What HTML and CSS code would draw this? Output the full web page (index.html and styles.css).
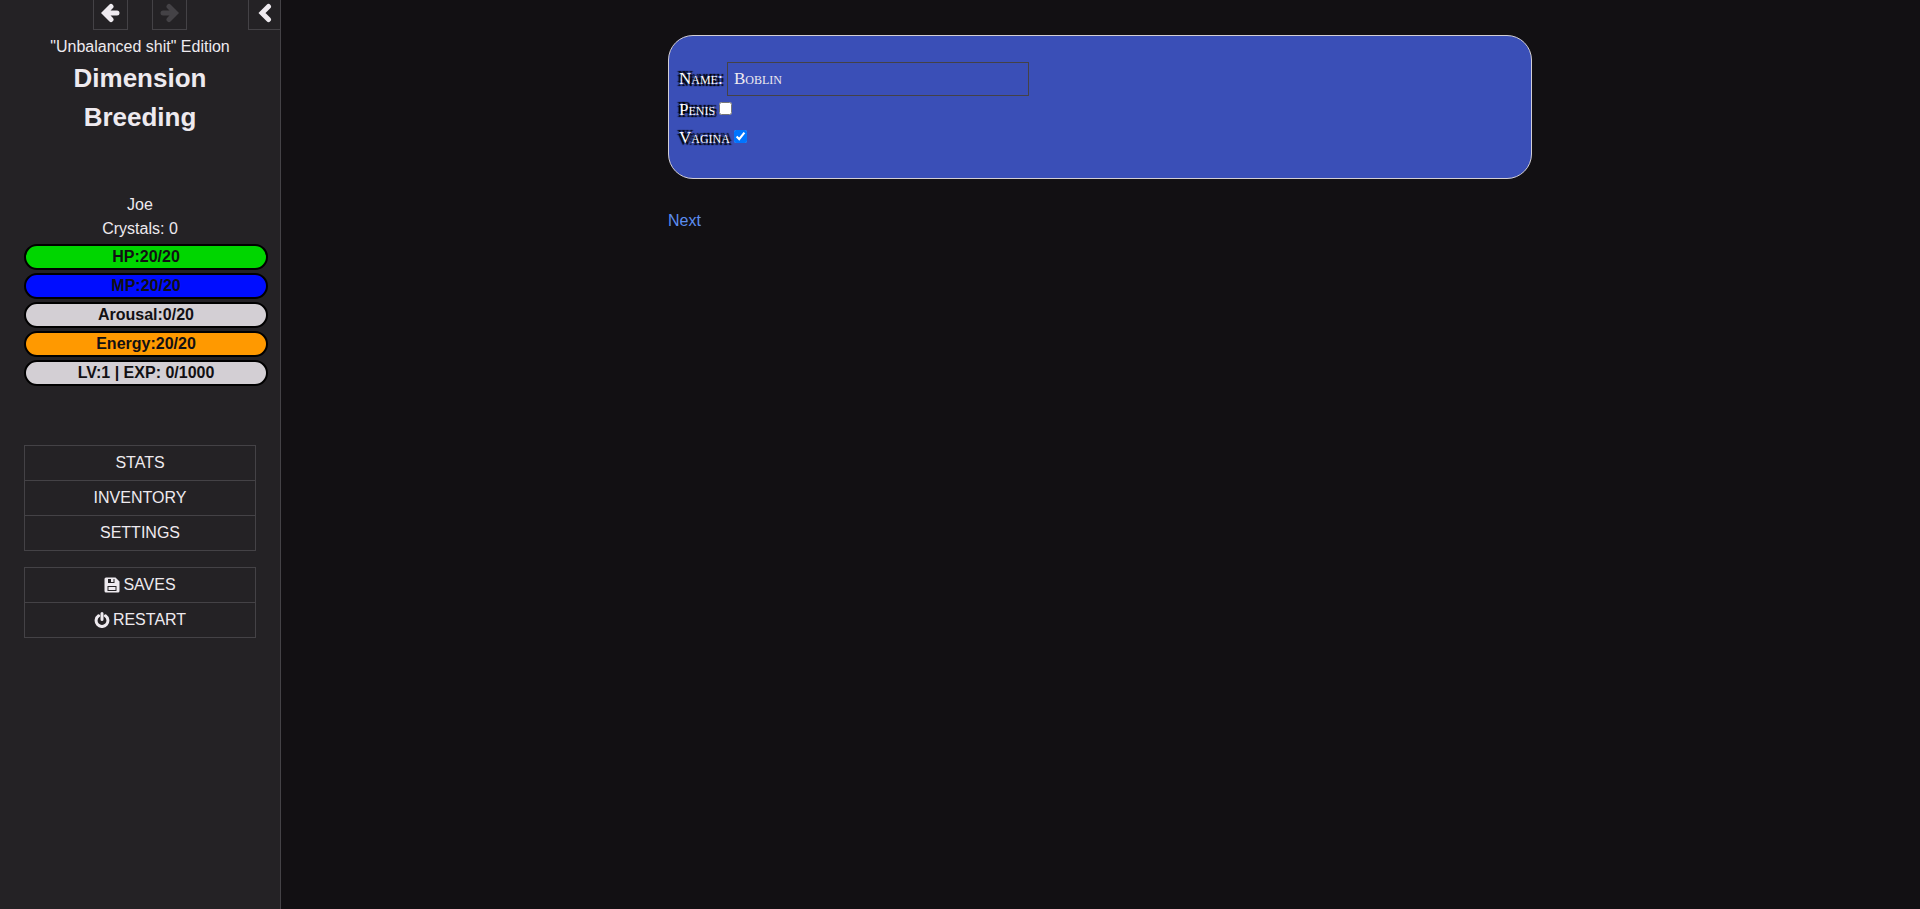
FILE: index.html
```
<!DOCTYPE html>
<html lang="en">
<head>
  <meta charset="UTF-8">
  <meta name="viewport" content="width=device-width, initial-scale=1.0">
  <link rel="stylesheet" href="styles.css">
  <title>Dimension Breeding</title>
</head>
<body>
  <aside class="ui-bar">
    <div class="ui-bar-tray">
      <button class="history-btn" type="button" aria-label="Back">
        <svg width="19" height="20" viewBox="0 0 19 20"><path d="M10 3.5 L3.5 10 L10 16.5 M5 10 H16" /></svg>
      </button>
      <button class="history-btn" type="button" aria-label="Forward" disabled>
        <svg width="19" height="20" viewBox="0 0 19 20"><path d="M9 3.5 L15.5 10 L9 16.5 M14 10 H3" /></svg>
      </button>
      <button class="toggle-btn" type="button" aria-label="Toggle the UI bar">
        <svg width="14" height="20" viewBox="0 0 14 20"><path d="M10.5 3.5 L4 10 L10.5 16.5" /></svg>
      </button>
    </div>
    <div class="ui-bar-body">
      <div class="subtitle">"Unbalanced shit" Edition</div>
      <h1 class="title">Dimension<br>Breeding</h1>
      <div class="caption">
        <div>Joe</div>
        <div>Crystals: 0</div>
        <!-- status bars -->
        <div class="bars">
          <div class="bar hp">HP:20/20</div>
          <div class="bar mp">MP:20/20</div>
          <div class="bar">Arousal:0/20</div>
          <div class="bar energy">Energy:20/20</div>
          <div class="bar">LV:1 | EXP: 0/1000</div>
        </div>
      </div>
      <nav>
        <ul class="menu">
          <li><a href="#">Stats</a></li>
          <li><a href="#">Inventory</a></li>
          <li><a href="#">Settings</a></li>
        </ul>
        <ul class="menu">
          <li><a href="#"><svg class="icon" width="16" height="16" viewBox="0 0 16 16"><path fill-rule="evenodd" d="M2 0.5 H11.5 L15.5 4.5 V14 Q15.5 15.5 14 15.5 H2 Q0.5 15.5 0.5 14 V2 Q0.5 0.5 2 0.5 Z M4 2 V6 H10.5 V2 H9.5 V5 H7 V2 Z M3.5 9 V14 H12.5 V9 Z M4.5 10 H11.5 V13 H4.5 Z" /></svg>Saves</a></li>
          <li><a href="#"><svg class="icon power" width="16" height="16" viewBox="0 0 16 16"><path d="M4.6 3.8 A5.9 5.9 0 1 0 11.4 3.8 M8 1.5 V7.5" /></svg>Restart</a></li>
        </ul>
      </nav>
    </div>
  </aside>

  <main class="story">
    <div class="passage">
      <form class="char-box">
        <div class="row"><label for="name">Name:</label> <input type="text" id="name" name="name" value="Boblin"></div>
        <div class="row"><label for="penis">Penis</label><input type="checkbox" id="penis" name="penis"></div>
        <div class="row"><label for="vagina">Vagina</label><input type="checkbox" id="vagina" name="vagina" checked></div>
      </form>
      <a href="#" class="next">Next</a>
    </div>
  </main>
</body>
</html>
```
FILE: styles.css
```
*{
  box-sizing: border-box;
}
body{
  margin: 0;
  min-height: 100vh;
  display: flex;
  background-color: #121013;
  color: #eeeaef;
  font-family: "Liberation Sans", Arial, sans-serif;
  font-size: 16px;
  line-height: 24px;
}

/* side bar */
.ui-bar{
  flex: none;
  width: 281px;
  background-color: #242225;
  border-right: 1px solid #444246;
  text-align: center;
}
.ui-bar-tray{
  display: flex;
  height: 30px;
  padding-left: 93px;
  gap: 24px;
}
.history-btn, .toggle-btn{
  display: flex;
  justify-content: center;
  padding: 3px 0 0;
  width: 35px;
  background-color: transparent;
  border: 1px solid #444246;
  border-top: none;
}
.toggle-btn{
  width: 32px;
  margin-left: auto;
  border-right: none;
}
.ui-bar-tray svg, .power{
  fill: none;
  stroke: #eeeaef;
  stroke-width: 5;
  stroke-linecap: round;
}
.history-btn:disabled svg{
  stroke: #444246;
}
.ui-bar-body{
  padding: 5px 24px;
}
.title{
  margin: 0;
  font-size: 26px;
  line-height: 39px;
}
.caption{
  margin-top: 56px;
}
.bars{
  display: flex;
  flex-direction: column;
  gap: 3px;
  width: calc(100% + 12px);
  margin-top: 3px;
}
.bar{
  border: 2px solid #000;
  border-radius: 13px;
  background-color: #d3cfd4;
  color: #121013;
  font-weight: bold;
  line-height: 22px;
}
.hp{
  background-color: #00d600;
}
.mp{
  background-color: #000dff;
}
.energy{
  background-color: #ff9900;
}
nav{
  margin-top: 59px;
}
.menu{
  list-style: none;
  margin: 0 0 16px;
  padding: 0;
  border: 1px solid #444246;
}
.menu li + li{
  border-top: 1px solid #444246;
}
.menu a{
  display: flex;
  justify-content: center;
  align-items: center;
  gap: 3px;
  padding: 5px;
  color: #eeeaef;
  text-decoration: none;
  text-transform: uppercase;
}
.icon{
  fill: #eeeaef;
}
.icon.power{
  fill: none;
  stroke-width: 3;
}

/* story */
.story{
  flex: 1;
  padding: 35px 40px 35px 39px;
}
.passage{
  max-width: 864px;
  margin: 0 auto;
}
.char-box{
  padding: 26px 10px;
  margin-bottom: 30px;
  background-color: #3a4fb7;
  border: 1px solid #d3cfd4;
  border-radius: 25px;
  font-family: "Liberation Serif", serif;
  font-size: 17px;
  font-variant: small-caps;
  line-height: 28px;
}
.char-box label{
  color: #fff;
  text-shadow: -2px -2px 1px #000, 2px -2px 1px #000, -2px 2px 1px #000, 2px 2px 1px #000;
}
.char-box input[type="text"]{
  width: 302px;
  height: 34px;
  padding: 5px 6px;
  background-color: transparent;
  border: 1px solid #444246;
  color: #eeeaef;
  font: inherit;
}
.char-box input[type="checkbox"]{
  margin: 0 4px;
}
.next{
  color: #5c8df0;
  text-decoration: none;
}
```
